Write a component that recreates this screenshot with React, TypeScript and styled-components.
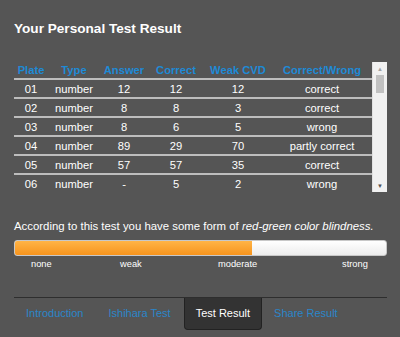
import styled, { createGlobalStyle } from "styled-components";

const GlobalStyle = createGlobalStyle`
  html, body {
    margin: 0;
    padding: 0;
    background: #555555;
  }
  body {
    font-family: "Liberation Sans", Arial, sans-serif;
    color: #fff;
  }
`;

const Page = styled.div`
  width: 400px;
  height: 337px;
  box-sizing: border-box;
  padding: 21px 13px 0 14px;
  overflow: hidden;
`;

const Title = styled.h2`
  margin: 0 0 25px;
  font-size: 13.6px;
  line-height: 16px;
  font-weight: bold;
  color: #fff;
`;

const ScrollBox = styled.div`
  display: flex;
  height: 130px;
`;

const Viewport = styled.div`
  flex: 1;
  overflow: hidden;
`;

const Track = styled.div`
  width: 14px;
  display: flex;
  flex-direction: column;
  align-items: center;
  background: #f1f1f1;
  border-left: 1px solid #e2e2e2;
`;

const Arrow = styled.div<{ $down?: boolean }>`
  height: 13px;
  width: 100%;
  display: flex;
  align-items: center;
  justify-content: center;
  color: ${(p) => (p.$down ? "#505050" : "#a3a3a3")};
  font-size: 6px;
  line-height: 1;
`;

const Thumb = styled.div`
  width: 8px;
  height: 18px;
  background: #c1c1c1;
`;

const Spacer = styled.div`
  flex: 1;
`;

const Table = styled.table`
  width: 100%;
  border-collapse: collapse;
  table-layout: fixed;
  font-size: 11.2px;
`;

const Th = styled.th`
  height: 16px;
  padding: 0;
  color: #1e8ad6;
  font-weight: bold;
  text-align: center;
  border-bottom: 2px solid #bdbdbd;
`;

const Td = styled.td`
  height: 17px;
  padding: 0;
  text-align: center;
  color: #fff;
  border-bottom: 2px solid #bdbdbd;
`;

const Verdict = styled.p`
  margin: 27px 0 0;
  font-size: 11.4px;
  line-height: 14px;
  color: #fff;
`;

const Bar = styled.div`
  margin-top: 7px;
  height: 16px;
  box-sizing: border-box;
  border: 1px solid #c8c8c8;
  border-radius: 3px;
  background: linear-gradient(#ffffff, #ececec);
  overflow: hidden;
`;

const Fill = styled.div`
  height: 100%;
  background: linear-gradient(#ffb446, #f7941d);
`;

const Scale = styled.div`
  display: grid;
  grid-template-columns: 89px 98px 124px auto;
  padding-left: 17px;
  margin-top: 2px;
  font-size: 9.3px;
  line-height: 12px;
  color: #fff;
`;

const Tabs = styled.nav`
  display: flex;
  margin-top: 27px;
  border-top: 1px solid #2e2e2e;
`;

const Tab = styled.div<{ $active?: boolean }>`
  padding: 9px 11px 9px;
  font-size: 11px;
  line-height: 13px;
  border: 1px solid transparent;
  border-top: none;
  border-radius: 0 0 4px 4px;
  color: ${(p) => (p.$active ? "#fff" : "#2b86c9")};
  background: ${(p) => (p.$active ? "#333333" : "transparent")};
  border-color: ${(p) => (p.$active ? "#222" : "transparent")};
  margin-right: ${(p) => (p.$active ? "0" : "1px")};
`;

const rows = [
  ["01", "number", "12", "12", "12", "correct"],
  ["02", "number", "8", "8", "3", "correct"],
  ["03", "number", "8", "6", "5", "wrong"],
  ["04", "number", "89", "29", "70", "partly correct"],
  ["05", "number", "57", "57", "35", "correct"],
  ["06", "number", "-", "5", "2", "wrong"],
];

const widths = [34, 52, 48, 56, 68, 100];
const heads = ["Plate", "Type", "Answer", "Correct", "Weak CVD", "Correct/Wrong"];

export default function App() {
  return (
    <Page>
      <GlobalStyle />
      <Title>Your Personal Test Result</Title>
      <ScrollBox>
        <Viewport>
          <Table>
            <colgroup>
              {widths.map((w, i) => (
                <col key={i} style={{ width: w }} />
              ))}
            </colgroup>
            <thead>
              <tr>
                {heads.map((h) => (
                  <Th key={h}>{h}</Th>
                ))}
              </tr>
            </thead>
            <tbody>
              {rows.map((r) => (
                <tr key={r[0]}>
                  {r.map((c, i) => (
                    <Td key={i}>{c}</Td>
                  ))}
                </tr>
              ))}
            </tbody>
          </Table>
        </Viewport>
        <Track>
          <Arrow>▲</Arrow>
          <Thumb />
          <Spacer />
          <Arrow $down>▼</Arrow>
        </Track>
      </ScrollBox>
      <Verdict>
        According to this test you have some form of <i>red-green color blindness.</i>
      </Verdict>
      <Bar>
        <Fill style={{ width: "64%" }} />
      </Bar>
      <Scale>
        <span>none</span>
        <span>weak</span>
        <span>moderate</span>
        <span>strong</span>
      </Scale>
      <Tabs>
        <Tab>Introduction</Tab>
        <Tab>Ishihara Test</Tab>
        <Tab $active>Test Result</Tab>
        <Tab>Share Result</Tab>
      </Tabs>
    </Page>
  );
}
